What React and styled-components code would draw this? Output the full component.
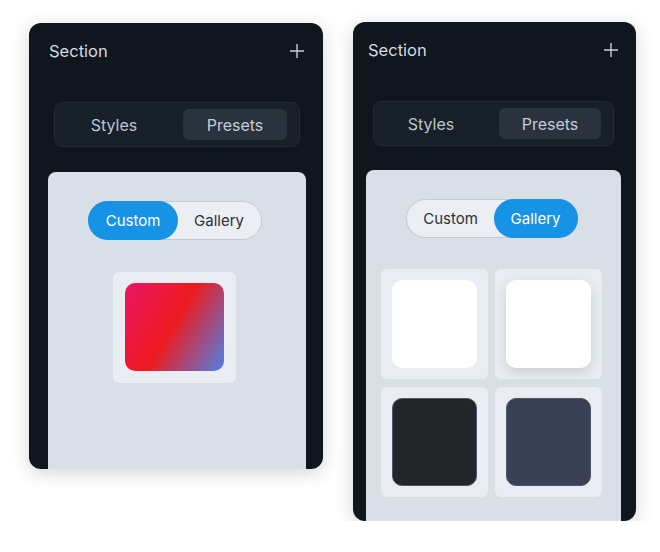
import React, { useState } from 'react';
import styled, { createGlobalStyle } from 'styled-components';

const GlobalStyle = createGlobalStyle`
  body {
    margin: 0;
    background: #ffffff;
    font-family: Inter, "Noto Sans", sans-serif;
  }
`

const Page = styled.div`
  display: flex;
  align-items: flex-start;
  gap: 30px;
  padding: 22px 0 0 29px;
`

// 다크 패널
const Panel = styled.div`
  width: ${props => props.w}px;
  height: ${props => props.h}px;
  margin-top: ${props => props.top || 0}px;
  box-sizing: border-box;
  padding: 18px ${props => props.padRight}px 0 ${props => props.padLeft}px;
  background-color: #10161d;
  border-radius: 12px;
  box-shadow: 0 4px 18px rgba(20, 30, 45, 0.18);
  overflow: hidden;
  display: flex;
  flex-direction: column;
`

const Header = styled.div`
  display: flex;
  align-items: center;
  justify-content: space-between;
  height: 20px;
  padding: 0 ${props => props.inset}px;
`

const Title = styled.span`
  color: #d5dae0;
  font-size: 16.5px;
`

const PlusButton = styled.button`
  border: none;
  background: none;
  padding: 0;
  width: 16px;
  height: 16px;
  display: flex;
  color: #c9cfd6;
  cursor: pointer;
`

// 탭 바
const TabBar = styled.div`
  display: flex;
  justify-content: space-between;
  margin: 41px ${props => props.inset}px 0;
  height: 45px;
  box-sizing: border-box;
  padding: 6px 12px 6px 6px;
  background-color: #171f28;
  border: 1px solid #212a35;
  border-radius: 8px;
`

const Tab = styled.button`
  width: ${props => props.w}px;
  border: none;
  border-radius: 6px;
  background-color: ${props => props.active ? '#29323d' : 'transparent'};
  color: ${props => props.active ? '#c4ccd7' : '#bcc5d1'};
  font-family: Inter, sans-serif;
  font-size: 16px;
  cursor: pointer;
`

// 밝은 콘텐츠 영역
const Content = styled.div`
  flex: 1;
  margin-top: ${props => props.gap}px;
  background-color: #d8dfe6;
  border-radius: 8px 8px 0 0;
  padding-top: 29px;
  display: flex;
  flex-direction: column;
  align-items: center;
`

const Toggle = styled.div`
  display: flex;
  width: ${props => props.w}px;
  height: 39px;
  box-sizing: border-box;
  background-color: #ebeff3;
  border: 1px solid #c3cad3;
  border-radius: 20px;
  margin-left: ${props => props.shift || 0}px;
`

const ToggleOption = styled.button`
  flex: ${props => props.basis ? `0 0 ${props.basis}px` : '1'};
  border: none;
  border-radius: 20px;
  margin: -1px;
  background-color: ${props => props.active ? '#1793e6' : 'transparent'};
  color: ${props => props.active ? '#ffffff' : '#2c3038'};
  font-family: Inter, sans-serif;
  font-size: 15px;
  cursor: pointer;
`

const PreviewCard = styled.div`
  margin-top: 32px;
  margin-right: 6px;
  width: 123px;
  height: 111px;
  box-sizing: border-box;
  padding: 11px 12px;
  background-color: #eaeef3;
  border-radius: 6px;
`

const GradientSwatch = styled.div`
  width: 99px;
  height: 88px;
  border-radius: 10px;
  background: linear-gradient(120deg, #ea1666 0%, #ee1a1e 48%, #4e82e6 100%);
`

const Grid = styled.div`
  margin-top: 31px;
  margin-right: 4px;
  display: grid;
  grid-template-columns: 107px 107px;
  grid-auto-rows: 110px;
  column-gap: 7px;
  row-gap: 8px;
`

const GridCell = styled.button`
  border: none;
  padding: 11px;
  background-color: #e9edf2;
  border-radius: 6px;
  display: flex;
  cursor: pointer;
`

const Swatch = styled.div`
  flex: 1;
  border-radius: 10px;
  background-color: ${props => props.color};
  border: ${props => props.dark ? '1px solid #50566a' : 'none'};
  box-shadow: ${props => props.raised ? '0 4px 12px rgba(40, 50, 70, 0.16)' : 'none'};
`

const swatches = [
  { color: '#ffffff' },
  { color: '#ffffff', raised: true },
  { color: '#242529', dark: true },
  { color: '#3a4055', dark: true },
]

const Plus = () => (
  <svg width="16" height="16" viewBox="0 0 16 16" fill="none" stroke="currentColor" strokeWidth="1.4">
    <path d="M8 1v14M1 8h14" />
  </svg>
)

const SectionPanel = ({ w, h, top, padLeft, padRight, headerInset, tabInset, tabWidths, contentGap, mode, toggleWidth, toggleShift }) => {
  const [tab, setTab] = useState('Presets');
  const [view, setView] = useState(mode);

  return (
    <Panel w={w} h={h} top={top} padLeft={padLeft} padRight={padRight}>
      <Header inset={headerInset}>
        <Title>Section</Title>
        <PlusButton><Plus /></PlusButton>
      </Header>
      <TabBar inset={tabInset}>
        <Tab w={tabWidths[0]} active={tab === 'Styles'} onClick={() => setTab('Styles')}>Styles</Tab>
        <Tab w={tabWidths[1]} active={tab === 'Presets'} onClick={() => setTab('Presets')}>Presets</Tab>
      </TabBar>
      <Content gap={contentGap}>
        <Toggle w={toggleWidth} shift={toggleShift}>
          <ToggleOption basis={view === 'Custom' ? 90 : 0} active={view === 'Custom'} onClick={() => setView('Custom')}>Custom</ToggleOption>
          <ToggleOption basis={view === 'Gallery' ? 84 : 0} active={view === 'Gallery'} onClick={() => setView('Gallery')}>Gallery</ToggleOption>
        </Toggle>
        {view === 'Custom' ? (
          <PreviewCard>
            <GradientSwatch />
          </PreviewCard>
        ) : (
          <Grid>
            {swatches.map((s, i) => (
              <GridCell key={i}>
                <Swatch color={s.color} raised={s.raised} dark={s.dark} />
              </GridCell>
            ))}
          </Grid>
        )}
      </Content>
    </Panel>
  );
};

const App = () => (
  <>
    <GlobalStyle />
    <Page>
      <SectionPanel w={294} h={446} top={1} padLeft={19} padRight={17} headerInset={1} tabInset={6} tabWidths={[106, 104]} contentGap={25} mode="Custom" toggleWidth={174} toggleShift={-4} />
      <SectionPanel w={283} h={499} padLeft={13} padRight={15} headerInset={2} tabInset={7} tabWidths={[102, 102]} contentGap={24} mode="Gallery" toggleWidth={172} toggleShift={-4} />
    </Page>
  </>
);

export default App;
